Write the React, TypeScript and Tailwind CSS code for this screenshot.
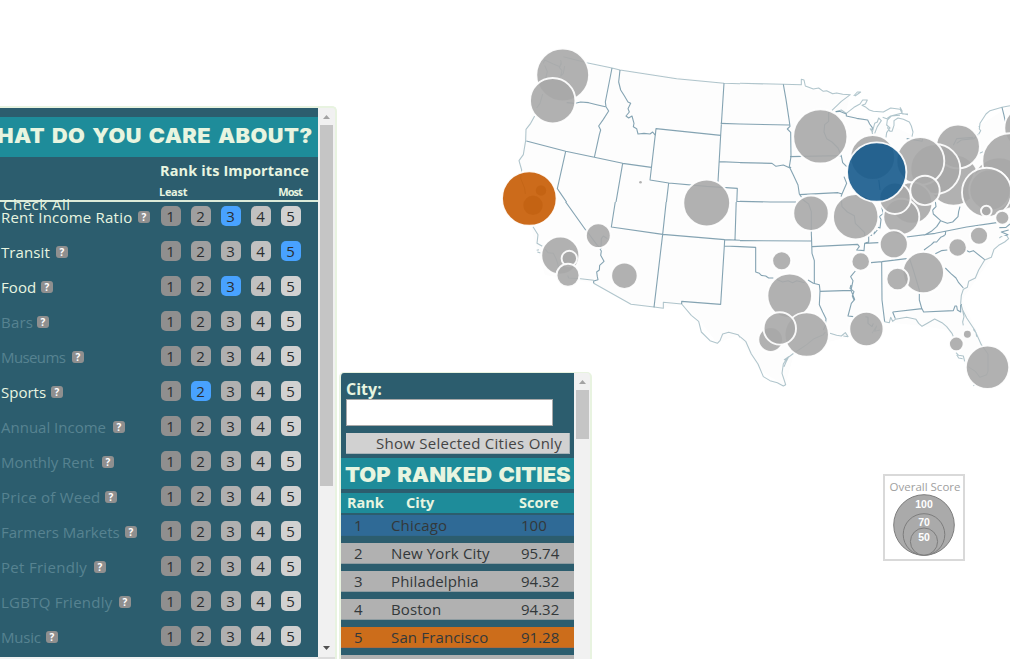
import React from "react";

const factors: { name: string; rank: number; tracking: string; gap: string }[] = [
  { name: "Rent Income Ratio", rank: 3, tracking: "tracking-[0.22px]", gap: "w-[137px]" },
  { name: "Transit", rank: 5, tracking: "tracking-[0.1px]", gap: "w-[55px]" },
  { name: "Food", rank: 3, tracking: "tracking-[0.1px]", gap: "w-[40px]" },
  { name: "Bars", rank: 0, tracking: "tracking-[0.2px]", gap: "w-[36px]" },
  { name: "Museums", rank: 0, tracking: "tracking-[-0.6px]", gap: "w-[71px]" },
  { name: "Sports", rank: 2, tracking: "tracking-[0px]", gap: "w-[50px]" },
  { name: "Annual Income", rank: 0, tracking: "tracking-[0px]", gap: "w-[112px]" },
  { name: "Monthly Rent", rank: 0, tracking: "tracking-[-0.05px]", gap: "w-[101px]" },
  { name: "Price of Weed", rank: 0, tracking: "tracking-[0.25px]", gap: "w-[104px]" },
  { name: "Farmers Markets", rank: 0, tracking: "tracking-[0.02px]", gap: "w-[124px]" },
  { name: "Pet Friendly", rank: 0, tracking: "tracking-[0.3px]", gap: "w-[93px]" },
  { name: "LGBTQ Friendly", rank: 0, tracking: "tracking-[0.25px]", gap: "w-[118px]" },
  { name: "Music", rank: 0, tracking: "tracking-[-0.2px]", gap: "w-[45px]" },
];

const shades = ["bg-[#8f8f8f]", "bg-[#9f9f9f]", "bg-[#b0b0b0]", "bg-[#c1c1c1]", "bg-[#d1d1d1]"];

const cities = [
  { rank: 1, name: "Chicago", score: "100", bg: "bg-[#2f6a96] border-[#2f6890]" },
  { rank: 2, name: "New York City", score: "95.74", bg: "bg-[#b1b1b1] border-[#8e9ca1]" },
  { rank: 3, name: "Philadelphia", score: "94.32", bg: "bg-[#b1b1b1] border-[#8e9ca1]" },
  { rank: 4, name: "Boston", score: "94.32", bg: "bg-[#b1b1b1] border-[#8e9ca1]" },
  { rank: 5, name: "San Francisco", score: "91.28", bg: "bg-[#cc6d1b] border-[#b0693a]" },
];

const GRAY = "#a8a8a8";
const bubbles: [number, number, number, string?][] = [
  [562.7, 75, 25.7],
  [552.7, 100.7, 22],
  [541, 190.5, 5.5],
  [533, 205.3, 10],
  [529.3, 198.5, 26.6, "#c65b02"],
  [706.7, 203, 22.7],
  [598.3, 235.6, 11.7],
  [560.3, 255.6, 18.3],
  [569.3, 258.5, 7],
  [568, 275.3, 10.8],
  [624.4, 275.7, 12.5],
  [820.3, 136.4, 26.4],
  [872.7, 157.5, 21.7],
  [811, 213.2, 17],
  [855.7, 216.7, 22],
  [953.5, 180, 25],
  [958, 146.5, 21.2],
  [935.3, 169, 24.3],
  [920.3, 161, 23.3],
  [911.7, 203, 20],
  [901.3, 216.7, 17.3],
  [895, 198.3, 15],
  [925, 190.4, 14],
  [876.7, 172.1, 29, "#165a8c"],
  [1026, 128, 21],
  [999, 184, 26],
  [1010, 161, 27],
  [990, 190, 20],
  [986.7, 192.4, 24],
  [1002.3, 217.7, 6.3],
  [986.3, 211, 4.6],
  [893.8, 244.3, 13.3],
  [979, 235.7, 8.3],
  [957.6, 247.5, 8.5],
  [860.7, 261.5, 8.5],
  [923.3, 272.6, 20],
  [897.6, 279, 10.5],
  [781.7, 260.8, 8.8],
  [789.7, 295.8, 21.6],
  [806.7, 334.6, 21.5],
  [770.7, 339.5, 11.7],
  [779.8, 328.4, 15.5],
  [866.4, 329, 16.4],
  [956.3, 343.9, 6.6],
  [967.4, 334.3, 3.7],
  [987.5, 367.3, 21],
  [640.5, 182.3, 1.3],
];

const westBorders = [
  "M366 84L346 186L348 200L356 213L340 238L326 258L332 270L328 284L313 352",
  "M109 303L227 334L313 352L398 370L484 382",
  "M390 90L386 126L392 150L402 166L414 186L422 190L414 206L418 216L408 228L416 234L426 228L432 250L430 260L440 266L444 282L462 280L480 282L488 276L496 286L498 266L480 420L536 429L650 439L742 445L736 600",
  "M498 266L692 286",
  "M702 130L692 286L684 425",
  "M692 250L810 254M688 365L780 369L810 370M740 484L810 486",
  "M227 334L202 446L287 570",
  "M398 370L365 562L518 582L736 599M536 429L518 582L515 600",
  "M230 188L256 190L272 186L296 188L320 194L346 200",
];
const westCoast = [
  "M134 228L122 250L108 268L107 302L100 344L87 362L95 390L92 415L104 445L106 462M118 530L132 565L144 590L144 600",
  "M160 70L164 60L190 72L210 80L214 64M220 50L290 68L366 84L390 90L560 116L702 130L810 133M158 162L150 190L140 204M164 76L172 95L166 120",
  "M212 60L214 72L208 82L216 92L212 108L220 100L224 78",
];
const southWest = [
  "M190 -4L257 90M348 -8L334 81L488 103L674 119L780 123M500 -8L488 103L462 322",
  "M710 4L780 5M709 -6L705 120M674 119L673 138L767 142L767 216L776 224L780 224M673 138L662 313L545 304L545 312",
  "M300 147L304 153L302 166L312 184L299 196L298 210L290 216L292 230L294 239L281 243L281 250",
  "M258 90L292 136L303 145L304 116L310 108L322 116",
];
const southCoast = [
  "M99 80L114 104L111 130L127 139M135 147L144 158L160 160L168 176L173 190L176 205M203 226L206 234L242 236L281 241M281 250L393 313L462 321L490 325L490 307L545 312L574 346L596 364L604 396L630 422L652 430L660 422L668 402L686 397L714 404L734 428L752 464L776 488L778 512",
  "M110 151L117 149M112 156L122 159",
];
const northEast = [
  "M0 192L148 195M0 308L96 310L108 319L130 315L150 324L153 321M0 424L92 426L168 426M0 542L214 543M0 561L47 562L47 570M214 515L215 570",
  "M130 73L138 118L148 184L150 199L142 207L152 217L153 290L148 320L160 345L174 375L178 402L190 420L206 432L214 455L214 515",
  "M150 290L303 287M178 404L294 398L306 402L320 370L312 350",
  "M266 156L266 184L254 194L252 216L260 236L276 246L294 264L304 288L308 308L320 320M303 410L306 402M304 416L306 440L322 456L343 467L346 490L356 500L374 518L374 530",
  "M414 502L420 504L423 478L418 470L430 460L424 438M404 515L402 522L412 510M386 535L396 524M500 531L586 520L680 501L770 488",
  "M287 155L299 154L319 162L319 168L350 175L383 180L389 192L397 203L396 210",
  "M414 340L420 390M500 236L546 244L548 236M586 424L588 440L578 450L580 462L602 482L622 490L638 486L654 470L656 454L660 440",
  "M602 482L590 500L574 514L554 525M617 515L616 524L604 532",
  "M786 142L792 166L796 185M650 250L664 240L702 236L714 224",
  "M640 256L650 236L700 232",
  "M810 492L798 502L778 503M806 510L784 516L804 524L780 534L806 538L790 550L776 548L764 570",
];
const northCoast = [
  "M0 70L130 73L184 74L184 58L192 60L196 78L220 87L236 84L250 94L260 92L278 101L290 99L308 103L331 104L304 124L276 151",
  "M341 108L352 96L362 96L345 108",
  "M287 155L304 150L319 160L342 142L360 132L368 120L382 120L376 132L366 136L378 142L388 150L400 154L430 156L452 144L480 148L488 162L504 162M480 142L486 152L486 160",
  "M396 220L404 190L412 186L416 174L424 182L412 200L404 220M390 205L396 214L398 222",
  "M438 232L440 218L450 204L440 195L442 180L454 168L480 166M442 202L450 214L456 214L462 196L462 182L474 174L490 178L508 186L514 198L519 216L516 230",
  "M428 172L440 176L452 168L484 160L504 164",
  "M810 137L786 142L750 152L738 162L720 190L718 207L722 212L716 223M718 280L730 275M720 198L716 200",
];
const southEast = [
  "M0 80L47 82L47 156L58 160L64 166L77 168L86 174L100 174M108 174L114 180L128 186L144 182L158 188L170 182L194 188M204 180L220 190L238 194L240 212L238 254L248 276L258 296L256 318L250 330",
  "M0 62L214 63M214 36L216 100L223 122L223 190M217 80L353 73L358 80L350 90L372 92L374 70L386 66L386 40M374 70L415 68M500 51L586 40L680 21L768 8",
  "M240 214L333 211L339 182L332 170L340 160L346 153M333 211L344 238L334 250L324 288L340 290M333 195L330 205L342 215L337 228L343 242M376 290L384 292L384 310L396 320L400 310",
  "M393 128L426 125L500 116M425 125L426 240L434 305M508 114L520 150L538 210L538 240L546 268M458 276L546 266L551 276L640 272L645 258L650 258L652 270L662 276L662 256L665 253",
  "M458 276L466 296M617 35L615 46L602 52L590 66L582 66L574 74L552 90M586 101L604 92L622 90M672 87L688 96L700 92L734 119M616 144L632 160L648 174L656 188L670 204",
];
const gulf = [
  "M0 350L17 364L34 402L54 432L70 470L90 482L112 488L130 498L137 494L126 460L130 432L140 416L158 402L176 390L200 374L222 356L250 344L256 336",
  "M270 340L290 346L304 348L316 338L324 350L310 348M396 340L410 318L404 334L420 330",
  "M434 305L448 308L452 292L458 304L466 298L500 292L528 298L536 310L546 319L562 310L584 297L606 308L620 320L636 340L640 350M648 398L656 406L670 408L674 424M650 404L656 414L668 416",
  "M800 10L808 30L796 40L806 56L794 66L776 76L762 88L754 112L734 120L716 150L706 174L686 184L682 202L670 208L664 226L662 250L668 270L680 294L704 330L724 374L744 402L744 454L740 464L720 472L706 454L684 440M700 328L708 338L710 350",
  "M132 420L146 410L138 426L132 440M780 38L794 42L778 54M700 497L706 494M668 272L672 290L668 306L670 316",
];

type LayerProps = {
  id: string;
  at: [number, number];
  box: [number, number, number, number];
  inner: string[];
  coast: string[];
};

function Layer({ id, at, box, inner, coast }: LayerProps) {
  return (
    <g clipPath={`url(#${id})`}>
      <clipPath id={id}>
        <rect x={box[0]} y={box[1]} width={box[2] - box[0]} height={box[3] - box[1]} />
      </clipPath>
      <g transform={`translate(${at[0]} ${at[1]}) scale(0.33333)`} fill="none" strokeLinejoin="round">
        <path d={inner.join("")} stroke="#44738a" strokeOpacity={0.65} strokeWidth={3.3} />
        <path d={coast.join("")} stroke="#6f95a3" strokeOpacity={0.55} strokeWidth={3.2} />
      </g>
    </g>
  );
}

function CityMap() {
  return (
    <svg className="absolute inset-0" width="1010" height="659" viewBox="0 0 1010 659">
      <path
        fill="#fdfdfd"
        d="M545 60L612 68L724 83L801 84L805 89L850 94L846 112L890 125L912 135L915 150L960 150L980 125L1010 106V225L990 260L962 300L988 354L982 376L965 365L948 330L922 326L885 322L845 338L795 350L785 386L760 370L738 335L717 343L700 321L682 304L663 308L631 304L593 283L545 275L533 235L519 160L527 125L543 90Z"
      />
      <Layer id="northwest" at={[490, 40]} box={[490, 40, 740, 202]} inner={westBorders} coast={westCoast} />
      <Layer id="southwest" at={[500, 200]} box={[490, 202, 740, 400]} inner={southWest} coast={southCoast} />
      <Layer id="northeast" at={[740, 60]} box={[740, 60, 1010, 236]} inner={northEast} coast={northCoast} />
      <Layer id="southeast" at={[740, 220]} box={[740, 236, 1010, 400]} inner={southEast} coast={gulf} />
      {bubbles.map(([cx, cy, r, fill], i) => (
        <circle
          key={i}
          cx={cx}
          cy={cy}
          r={r + (r > 2 ? 0.7 : 0)}
          fill={fill ?? GRAY}
          fillOpacity={0.9}
          stroke="#fff"
          strokeOpacity={0.93}
          strokeWidth={r > 2 ? 1.9 : 0}
        />
      ))}
    </svg>
  );
}

function ScoreLegend() {
  return (
    <div className="absolute left-[883px] top-[474px] flex h-[87px] w-[82px] flex-col items-center border-2 border-[#d9d9d9] bg-white pt-[3px]">
      <div className="h-[16px] whitespace-nowrap pl-[2px] text-[11.5px] leading-[16px] text-[#a0a0a0]">Overall Score</div>
      <div className="relative -mt-px h-[62px] w-[62px] text-center font-['Liberation_Sans'] text-[10.5px] font-bold leading-[12px] text-white">
        <svg className="absolute inset-0" width="62" height="62" viewBox="0 0 62 62" fill="#aaa" stroke="#7d7d7d">
          <circle cx="31" cy="31" r="30.3" />
          <circle cx="31" cy="40.5" r="20.8" />
          <circle cx="31" cy="47.6" r="13.6" />
        </svg>
        <div className="relative flex flex-col pt-[4px]">
          <span>100</span>
          <span className="mt-[6px]">70</span>
          <span className="mt-[3px]">50</span>
        </div>
      </div>
    </div>
  );
}

function Arrow({ down = false }: { down?: boolean }) {
  return (
    <svg width="7" height="4" viewBox="0 0 7 4" className="block shrink-0">
      <path d={down ? "M0 0H7L3.5 4Z" : "M0 4H7L3.5 0Z"} fill={down ? "#505050" : "#a3a3a3"} />
    </svg>
  );
}

function CarePanel() {
  return (
    <section className="flex h-[553px] w-[337px] shrink-0 flex-col overflow-hidden rounded-tr-[5px] border-r-2 border-t-2 border-[#e8f3e0] bg-[#f1f1f1]">
      <div className="flex h-[549px]">
        <div className="flex w-[318px] shrink-0 flex-col bg-[#2c5d6e] pt-[9px]">
          <h1 className="flex h-[40px] items-center justify-end whitespace-nowrap bg-[#1e8c9a] pb-[2px] pr-[5px] font-[Inter] text-[20px] font-black tracking-[0.4px] text-[#e8f5e0] [word-spacing:2px]">
            <span className="origin-right scale-x-[1.085]">WHAT DO YOU CARE ABOUT?</span>
          </h1>
          <div className="flex h-[46px] flex-col border-b-2 border-[#dcebd9] pl-[159px] font-bold text-[#e8f5e0]">
            <div className="mt-[4px] whitespace-nowrap pl-px text-[14.5px] leading-[20px] tracking-[0.12px]">Rank its Importance</div>
            <div className="mt-[4px] flex justify-between pr-[16px] text-[11px] leading-[14px] tracking-[-0.5px]">
              <span className="tracking-[-0.3px]">Least</span>
              <span className="tracking-[-0.9px]">Most</span>
            </div>
          </div>
          <div className="-mt-[8px] h-[20px] pl-[3px] text-[15px] leading-[20px] tracking-[0.5px] text-[#e8f5e0]">Check All</div>
          <div className="-mt-[12px] flex flex-col">
            {factors.map((f) => (
              <div key={f.name} className="flex h-[35px] items-start">
                <div className={`flex w-[161px] items-center pl-px pt-[5px] ${f.rank ? "text-[#e8f5e0]" : "text-[#578391]"}`}>
                  <span className={`${f.gap} ${f.tracking} shrink-0 whitespace-nowrap text-[15px] leading-[20px]`}>{f.name}</span>
                  <span className="flex h-[12px] w-[12px] shrink-0 items-center justify-center rounded-[3px] bg-[#8f8f8f] text-[10px] font-bold leading-none text-white">
                    ?
                  </span>
                </div>
                <div className="flex gap-[10px] pt-[4px]">
                  {shades.map((s, i) => (
                    <span
                      key={s}
                      className={`flex h-[20px] w-[20px] items-center justify-center rounded-[5px] pr-px text-[15px] leading-none text-[#2a2d30] ${f.rank === i + 1 ? "bg-[#48a2ff]" : s}`}
                    >
                      {i + 1}
                    </span>
                  ))}
                </div>
              </div>
            ))}
          </div>
        </div>
        <div className="flex w-[17px] flex-col items-center pt-[7px]">
          <Arrow />
          <div className="mt-[6px] h-[361px] w-[13px] shrink-0 bg-[#c5c5c5]" />
          <div className="mt-auto pb-[7px]">
            <Arrow down />
          </div>
        </div>
      </div>
      <div className="ml-[318px] h-[2px] w-[17px] bg-[#dcdcdc]" />
    </section>
  );
}

function CityPanel() {
  return (
    <section className="ml-[2px] mt-[266px] flex h-[300px] w-[253px] shrink-0 overflow-hidden rounded-t-[5px] border-x-2 border-t border-[#e8f3e0] bg-[#f1f1f1]">
      <div className="flex w-[233px] shrink-0 flex-col bg-[#2c5d6e]">
        <label className="flex flex-col pl-[5px] pt-[6px]">
          <span className="h-[20px] text-[16px] font-bold leading-[20px] text-[#e8f5e0]">City:</span>
          <input className="h-[27px] w-[207px] border border-[#a9a9a9] bg-white" />
        </label>
        <button className="ml-[5px] mt-[7px] h-[21px] w-[224px] whitespace-nowrap border-b border-r border-[#a9b4b8] bg-[#d1d1d1] pr-[7px] text-right text-[15px] leading-[20px] tracking-[0.29px] text-[#444]">
          Show Selected Cities Only
        </button>
        <h2 className="mt-[4px] flex h-[31px] items-center whitespace-nowrap bg-[#1e8c9a] pl-[4px] pt-[2px] font-[Inter] text-[20px] font-black text-[#e8f5e0] [word-spacing:2px]">
          <span className="origin-left scale-x-[1.095]">TOP RANKED CITIES</span>
        </h2>
        <div className="mt-[4px] flex h-[21px] items-center bg-[#1e8c9a] pl-[6px] text-[14.5px] font-bold leading-[20px] text-[#e8f5e0]">
          <span className="w-[59px]">Rank</span>
          <span className="w-[113px]">City</span>
          <span>Score</span>
        </div>
        <div className="mt-[2px] flex flex-col gap-[7px]">
          {cities.map((c) => (
            <div key={c.rank} className={`flex h-[21px] shrink-0 items-center border-b pl-[13px] text-[15px] leading-[20px] text-[#33383a] ${c.bg}`}>
              <span className="w-[37px]">{c.rank}</span>
              <span className="w-[130px] whitespace-nowrap tracking-[0.15px]">{c.name}</span>
              <span>{c.score}</span>
            </div>
          ))}
          <div className="h-[21px] shrink-0 bg-[#b1b1b1]" />
        </div>
      </div>
      <div className="flex w-[16px] flex-col items-center pt-[7px]">
        <Arrow />
        <div className="mt-[6px] h-[49px] w-[13px] bg-[#c5c5c5]" />
      </div>
    </section>
  );
}

export default function App() {
  return (
    <main className="relative h-[659px] w-[1010px] overflow-hidden bg-white font-['Open_Sans',sans-serif]">
      <CityMap />
      <div className="relative flex pt-[106px]">
        <CarePanel />
        <CityPanel />
      </div>
      <ScoreLegend />
    </main>
  );
}
